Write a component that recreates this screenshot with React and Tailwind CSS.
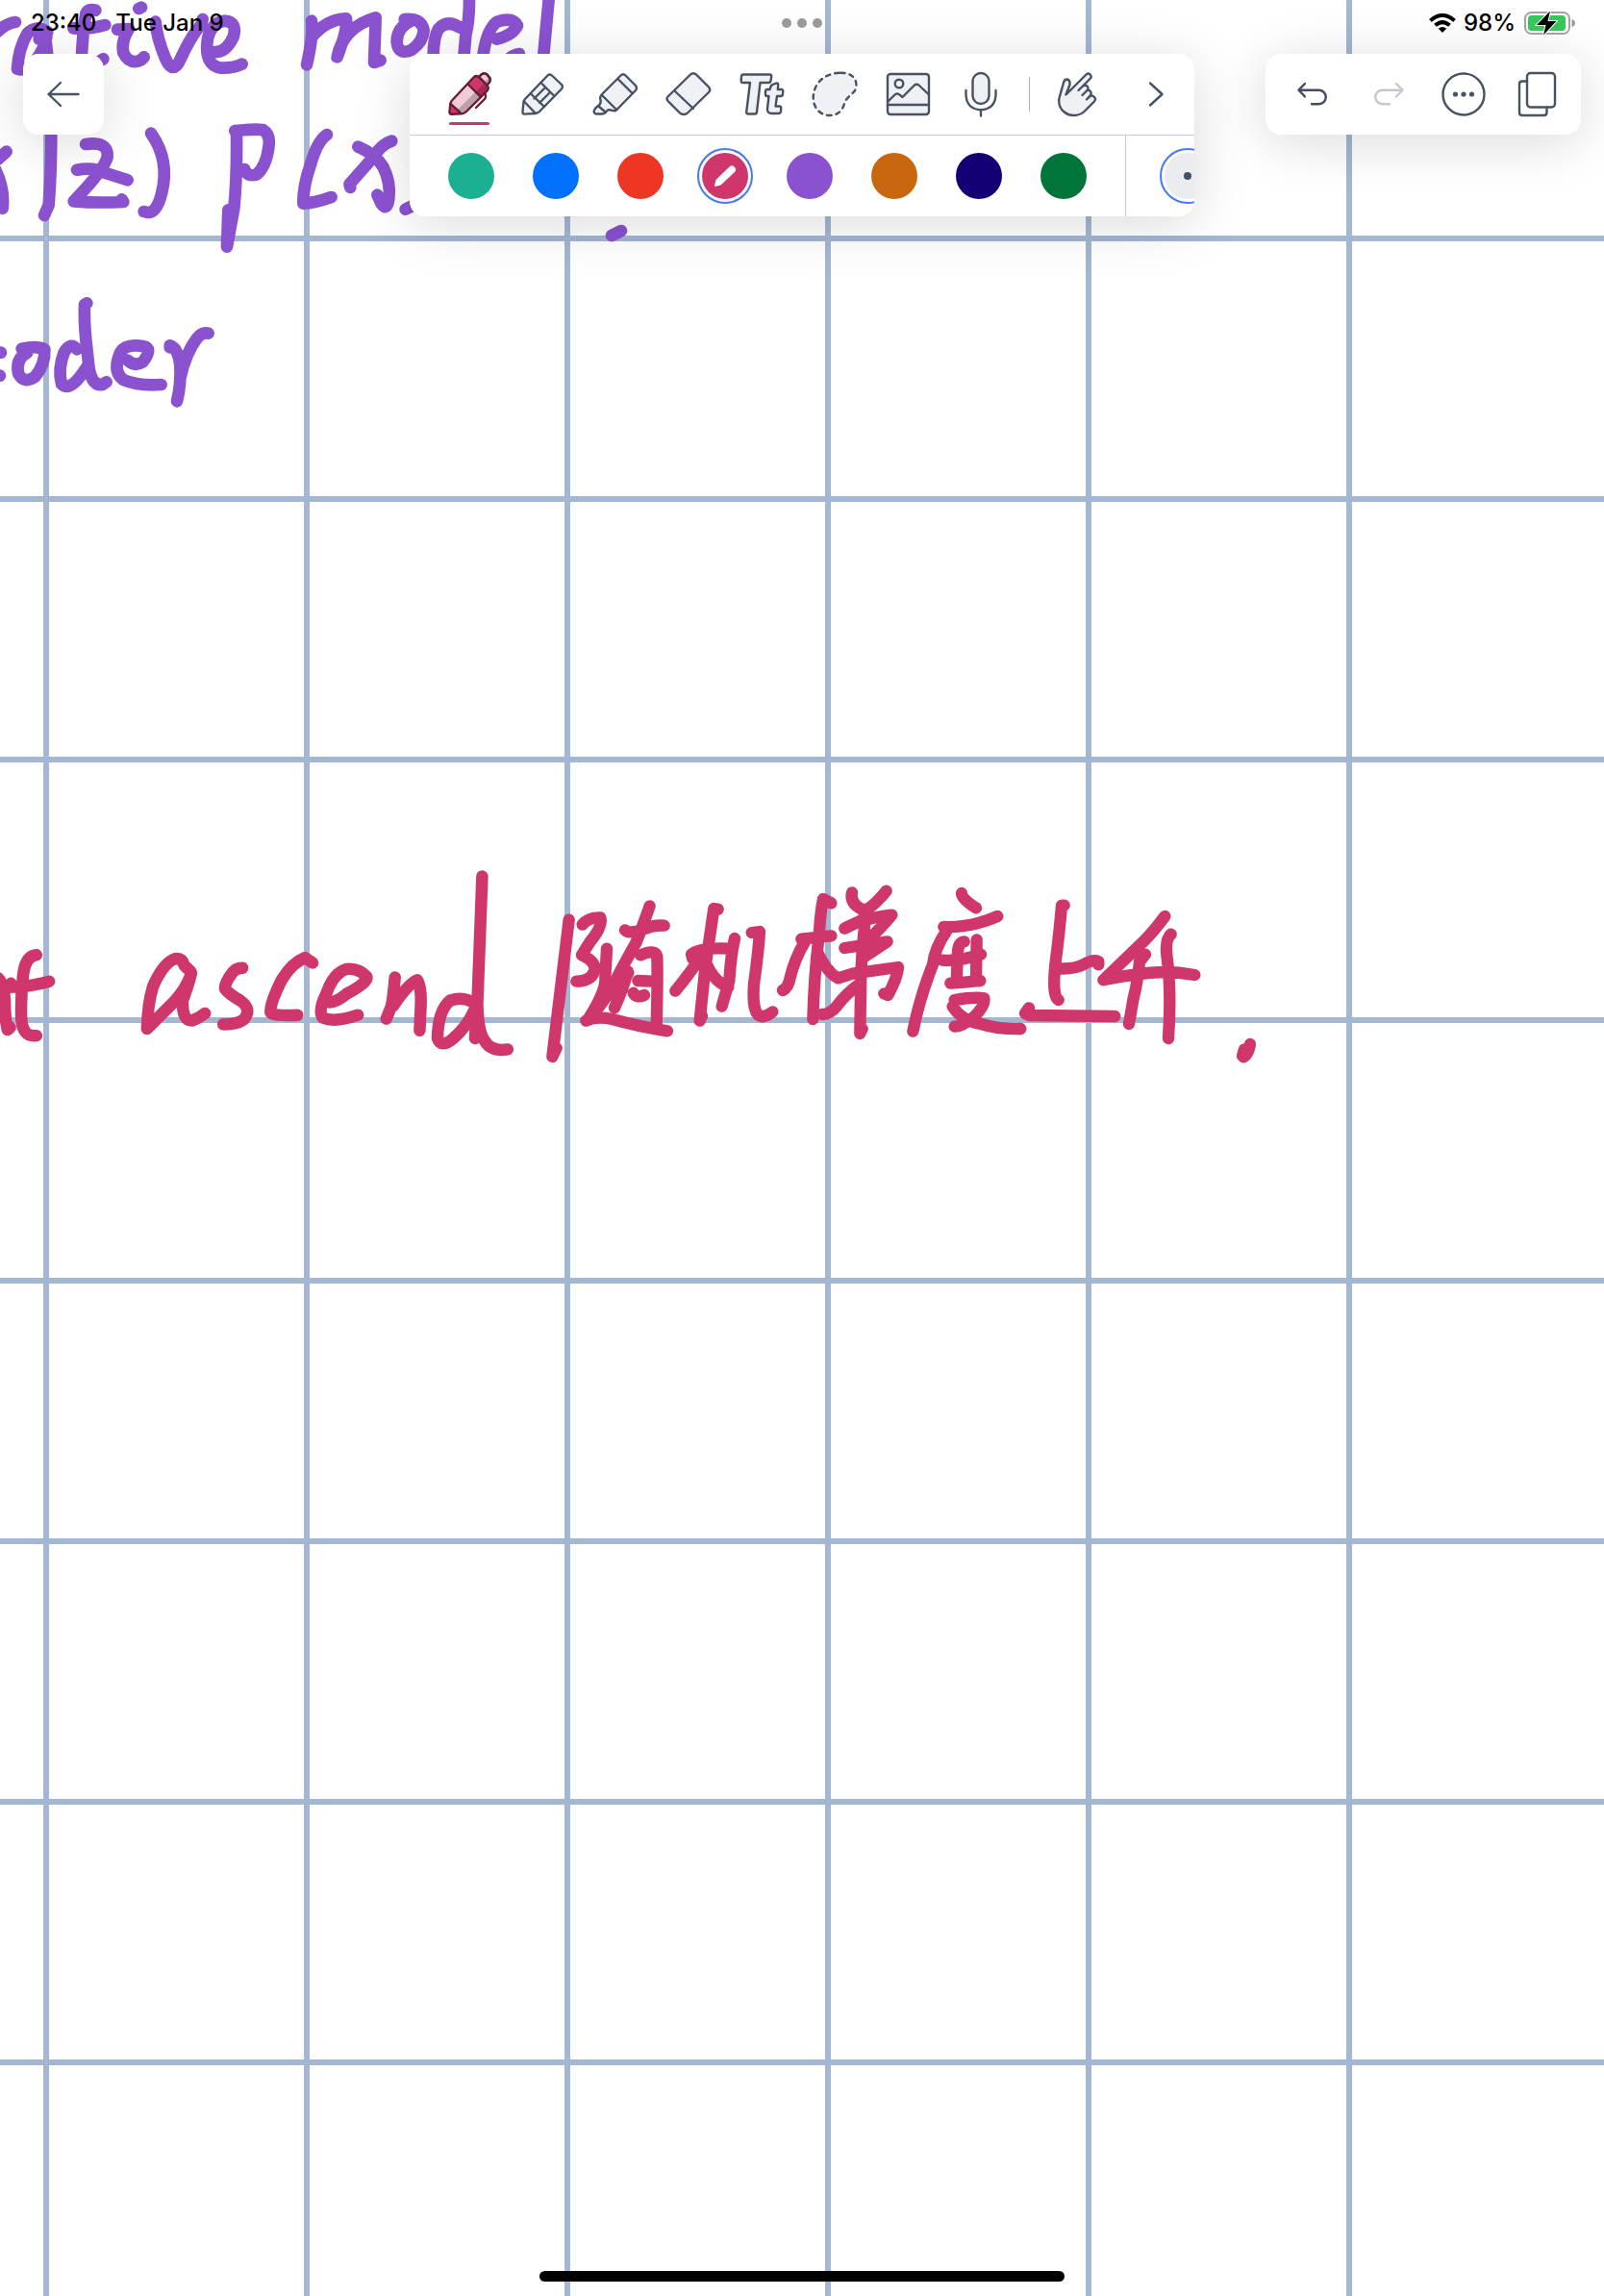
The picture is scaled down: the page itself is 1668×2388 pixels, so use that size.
const INK = '#475263';

function Icon({ children, color = INK, fill = 'none', size = 48, width = 2.4 }) {
  return (
    <svg
      width={size}
      height={size}
      viewBox="0 0 48 48"
      fill={fill}
      stroke={color}
      strokeWidth={width}
      strokeLinecap="round"
      strokeLinejoin="round"
      aria-hidden="true"
    >
      {children}
    </svg>
  );
}

const PenIcon = () => (
  <Icon color="#661e38">
    <path d="M3.5 42 4.3 34Q4.5 32 6 30.5L28 7Q31 3.5 34.5 6.5L43 15Q45 18 43 21L21 42.5Q19 44 16 44.2L5.5 44.8Q3.2 44.8 3.5 42Z" fill="#f3cad8" stroke="none" />
    <path d="M31 21 36.500 26.500 20 43 11 41Z" fill="#b9a0ab" stroke="none" />
    <path d="M22 13 28 7Q31 3.500 34.500 6.500L43 15Q45 18 43 20L36.500 26.500Z" fill="#cf366b" stroke="none" />
    <path d="M31 21.500 40 12 43 15Q45 18 43 20L36.500 26.500Z" fill="#a32a54" stroke="none" />
    <path d="M4.500 33 15 44 5.500 44.800Q3.200 44.800 3.500 42Z" fill="#cf366b" stroke="none" />
    <path d="M34 6 36.500 3.500Q39.500 1 42.500 3.500L44.500 6Q47 9 44.500 12L42.500 14.500Z" fill="#f3cad8" />
    <path d="M39.500 11 45 6.500Q47 9 44.500 12L42.500 14Z" fill="#b9a0ab" stroke="none" />
    <path d="M34 6 36.500 3.500Q39.500 1 42.500 3.500L44.500 6Q47 9 44.500 12L42.500 14.500" />
    <path d="M3.500 42 4.300 34Q4.500 32 6 30.500L28 7Q31 3.500 34.500 6.500L42.500 14.500Q45 17.500 42.500 20.500L21 42Q19 44 16 44.200L5.500 44.800Q3.200 44.800 3.500 42Z" />
    <path d="M22.500 13.500 36 27M4.500 34 15 43.500M40 23Q42.500 26.500 39.500 29.500L31 38" />
  </Icon>
);

const PencilIcon = () => (
  <Icon>
    <path d="M3.500 42 4.500 32Q4.600 30.500 6 29L29 5Q31.500 2 34.500 5L43.500 13.500Q46.500 16 43.500 19L21 42Q19.500 43.700 17 44L5.500 44.600Q3.200 44.700 3.500 42Z" fill="#f0f1f5" />
    <path d="M22.500 12 36.500 26M12.500 24 26 37M5 31.500 16.500 43.500M27 17 15.500 28.500M32 22 21 33" />
  </Icon>
);

const HighlighterIcon = () => (
  <Icon fill="#f0f1f5">
    <path d="M10 24 29.500 4.500Q32 2 34.500 4.500L45 15Q47 17.500 45 20L25.500 40Q23 42 21 41 17 39.500 15.500 41L13.500 43Q12 44.500 10 44.500H4Q1 44 2 40.500 3 38.500 5.500 36.500 9.500 34 8.500 30 7.500 26.500 10 24Z" />
    <path d="M10 25 25 40M26.500 8 41.500 23M6 36 14 43" />
  </Icon>
);

const EraserIcon = () => (
  <Icon fill="#f0f1f5">
    <path d="M2.500 26.500 26 3.500Q29 1 32 3.500L45 16.500Q47.500 19.500 45 22L23 43.500Q21.500 45 19 45 16.500 45 15 43.500L2.500 31Q0.500 28.500 2.500 26.500Z" />
    <path d="M9.500 20.500 29 39" fill="none" />
  </Icon>
);

const TextIcon = () => (
  <Icon fill="#f0f1f5">
    <path d="M5 3.500H32.500Q34.500 3.500 34.200 5.500L33.500 10Q33.200 12 31 12H22.500L19 42.500Q18.800 44.500 17 44.500H10Q8 44.500 8.200 42.500L12 12H4.500Q2.500 12 2.700 10L3 5.500Q3.200 3.500 5 3.500Z" />
    <path d="M35.500 14 39 12.700Q41.500 12 41.200 14.500L40.800 19H44.500Q46.500 19 46.200 21L46 24Q45.700 26 43.700 26H40L38.500 36.500H42.500Q44.500 36.500 44.200 38.500L44 42Q43.800 44 41.500 44H34Q29.500 43.500 30 39L31.500 26H30Q28 26 28 24V21Q28.200 19 30 19H32.500L33.500 16Q34 14.500 35.500 14Z" />
  </Icon>
);

const LassoIcon = () => (
  <Icon fill="#f0f1f5">
    <path d="M30 1.700C40 1.500 46.500 6.500 46.500 14.500 46.500 24 37 24 34 34 31.500 42 27 46 18.500 46 8 46 1.700 37 1.700 28 1.700 13 13 2 30 1.700Z" strokeDasharray="4.500 5" />
  </Icon>
);

const ImageIcon = () => (
  <Icon fill="#f0f1f5">
    <rect x="3" y="3" width="43" height="42" rx="3" />
    <circle cx="15" cy="13" r="4.300" />
    <path d="M3 32 10 25Q13 22 16 25L18.500 27 30.500 15Q33.500 12.500 36.500 15.500L46 24.500M3 35H46" fill="none" />
  </Icon>
);

const MicIcon = () => (
  <Icon>
    <rect x="15.500" y="2" width="17" height="32" rx="8.500" fill="#f0f1f5" />
    <path d="M8.500 20V25Q9.500 39.500 24 40.300 38.500 39.500 39.500 25V20M24 40.500V46.500" />
  </Icon>
);

const HandIcon = () => (
  <Icon fill="#f0f1f5">
    <path d="M12.500 24.500 16.500 14Q17 9 13.500 8.500 11 8.500 10 12L5.500 28Q4 36 9.500 41.500 15 46.500 22 46 28 45.500 32 41.500L42 31.500Q44 29 42 27 39.500 24.500 37.500 26L34 29.500 38 25Q39.500 22.500 37.500 20.500 35.500 19 33.500 21L29.500 25 34.500 20Q36.500 17.500 34.500 15.500 32 13.500 29 16.500L25.500 20 38 7.500Q39.500 5.500 37.500 3.300 35.500 1.500 33.500 3.500L12.500 24.500Z" />
  </Icon>
);

const TOOLS = [
  ['Pen', PenIcon],
  ['Pencil', PencilIcon],
  ['Highlighter', HighlighterIcon],
  ['Eraser', EraserIcon],
  ['Text', TextIcon],
  ['Lasso', LassoIcon],
  ['Image', ImageIcon],
  ['Microphone', MicIcon],
];

const COLORS = [
  ['Teal', 'bg-[#1bb092]'],
  ['Blue', 'bg-[#0070ff]'],
  ['Red', 'bg-[#ee3624]'],
  ['Pink', 'bg-[#cf366b]'],
  ['Purple', 'bg-[#8b52d0]'],
  ['Orange', 'bg-[#c9670e]'],
  ['Navy', 'bg-[#120074]'],
  ['Green', 'bg-[#007439]'],
];

const PANEL = 'rounded-2xl bg-white shadow-[0_8px_56px_rgba(0,0,0,0.15)]';

function StatusBar() {
  return (
    <div className="grid h-12 grid-cols-[1fr_auto_1fr] items-center text-2xl font-medium text-black">
      <div className="flex gap-5 pl-8">
        <span>23:40</span>
        <span>Tue Jan 9</span>
      </div>
      <button aria-label="Multitasking" className="flex gap-1.5">
        <span className="size-[10px] rounded-full bg-[#999]" />
        <span className="size-[10px] rounded-full bg-[#999]" />
        <span className="size-[10px] rounded-full bg-[#999]" />
      </button>
      <div className="flex items-center justify-end gap-2 pr-[30px]">
        <svg width="28" height="20" viewBox="0 0 28 20" fill="none" stroke="#000" strokeWidth="4" aria-label="Wi-Fi">
          <path d="M1.500 7.500Q14-3.500 26.500 7.500M6.500 12.300Q14 5.800 21.500 12.300" />
          <path d="M14 20 9.800 15.700Q14 12.500 18.200 15.700Z" fill="#000" stroke="none" />
        </svg>
        <span>98%</span>
        <svg width="54" height="26" viewBox="0 0 54 26" aria-label="Battery charging">
          <rect x="2" y="2" width="46" height="22" rx="6.500" fill="#fff" stroke="#a3a3a3" strokeWidth="2" />
          <rect x="5" y="5" width="39" height="16" rx="3.500" fill="#34c759" />
          <path d="M50.500 9Q54 10 54 13 54 16 50.500 17Z" fill="#999" />
          <path d="M28 0.500 14 15H23.500L21 25.500 34.500 11H25.500Z" fill="#000" stroke="#fff" strokeWidth="2" paintOrder="stroke" />
        </svg>
      </div>
    </div>
  );
}

function ToolPanel() {
  return (
    <section aria-label="Tools" className="w-[816px] overflow-hidden rounded-2xl bg-white">
      <div className="flex h-[84px] items-center pl-6">
        {TOOLS.map(([name, Glyph], i) => (
          <button key={name} aria-label={name} className="relative flex h-full w-[76px] items-center justify-center">
            <Glyph />
            {i === 0 && <span className="absolute bottom-[10px] h-[3px] w-[42px] rounded-full bg-[#cf366b]" />}
          </button>
        ))}
        <div className="flex w-6 justify-center">
          <span className="h-9 w-px bg-[#a9adba]" />
        </div>
        <button aria-label="Touch" className="flex h-full w-[76px] items-center justify-center">
          <HandIcon />
        </button>
        <button aria-label="More tools" className="flex h-full flex-1 items-center justify-center">
          <Icon>
            <path d="M20 12.500 32.500 24 20 35.500" />
          </Icon>
        </button>
      </div>
      <div className="flex h-[85px] items-center border-t border-[#c6cadb] pl-5">
        {COLORS.map(([name, bg]) => (
          <button key={name} aria-label={name} className="flex h-full w-[88px] shrink-0 items-center justify-center">
            {name === 'Pink' ? (
              <span className="flex size-[58px] items-center justify-center rounded-full border-2 border-[#4679f8]">
                <span className={'flex size-12 items-center justify-center rounded-full ' + bg}>
                  <svg width="48" height="48" viewBox="0 0 48 48" fill="#fff" aria-hidden="true">
                    <path d="M13 35 14 29.500Q14.200 28 15.500 27L28.500 14.500Q31 12 33.500 14.500 36.500 17.500 34 20L20.500 32.500Q19.500 33.700 18 34Z" />
                  </svg>
                </span>
              </span>
            ) : (
              <span className={'size-12 rounded-full ' + bg} />
            )}
          </button>
        ))}
        <div className="ml-5 flex h-full flex-1 items-center overflow-hidden border-l border-[#c6cadb] pl-[35px]">
          <button
            aria-label="Stroke size"
            className="flex size-[58px] shrink-0 items-center justify-center rounded-full border-2 border-[#4679f8]"
          >
            <span className="flex size-12 items-center justify-center rounded-full bg-[#ebecef]">
              <span className="size-2 rounded-full bg-[#475263]" />
            </span>
          </button>
        </div>
      </div>
    </section>
  );
}

function ActionPanel() {
  return (
    <section aria-label="Document" className={'flex h-[84px] items-center justify-self-end px-2 ' + PANEL}>
      <button aria-label="Undo" className="flex h-full w-20 items-center justify-center">
        <Icon color="#454b63">
          <path d="M17 13 10.500 19.700 17 26.500M10.500 19.700H31.500A7.300 7.300 0 0 1 31.500 34.300H24" />
        </Icon>
      </button>
      <button aria-label="Redo" disabled className="flex h-full w-20 items-center justify-center">
        <Icon color="#c6c8d0">
          <path d="M32 13 38.500 19.700 32 26.500M38.500 19.700H17.500A7.300 7.300 0 0 0 17.500 34.300H25" />
        </Icon>
      </button>
      <button aria-label="More" className="flex h-full w-[76px] items-center justify-center">
        <Icon>
          <circle cx="24" cy="24" r="21.500" />
          <g fill={INK} stroke="none">
            <circle cx="15.500" cy="24" r="2.600" />
            <circle cx="24" cy="24" r="2.600" />
            <circle cx="32.500" cy="24" r="2.600" />
          </g>
        </Icon>
      </button>
      <button aria-label="Pages" className="flex h-full w-[76px] items-center justify-center">
        <Icon>
          <path d="M14 10.500H9Q6 10.500 6 13.500V43Q6 46 9 46H31.500Q34.500 46 34.500 43V37.500" />
          <rect x="14" y="2" width="29" height="35.500" rx="3.500" />
        </Icon>
      </button>
    </section>
  );
}

/* Freehand pen strokes, grouped by the tile of the page they were written on. */
const STROKES = [
  {
    at: 'translate(0 0) scale(0.33333)',
    color: '#8b52d0',
    width: 38,
    lines: [
      'M-10 100Q25 70 48 69',
      'M148 100Q115 75 85 105 58 150 54 215 80 225 110 190 140 150 145 115L122 122M143 130 150 190',
      'M298 32Q275 26 268 42 258 100 254 190M229 88Q280 92 328 78M270 205Q300 200 322 184',
      'M433 27 441 23M366 92Q390 92 402 90 377 130 385 165 400 195 425 192 440 190 449 178',
      'M485 68Q490 120 515 180 540 240 565 180 600 105 628 78L632 60',
      'M668 162Q705 165 728 115 742 68 700 65 660 70 648 120 635 205 690 212 730 213 755 200',
      'M972 65Q978 110 957 202M973 115Q1020 60 1080 58 1085 90 1052 178 1070 85 1172 55 1170 120 1167 195L1187 188',
      'M20 473-8 498M-14 530Q15 590 8 650',
      'M160 400Q160 540 152 640L138 672',
      'M267 450Q340 440 335 490 325 530 230 628 300 634 385 630L380 622M240 530Q290 520 330 540L398 562',
      'M471 416Q530 500 505 600 490 665 460 663L449 660',
      'M733 408Q790 402 820 405 845 420 838 460 830 520 800 545 770 552 763 528M738 410Q740 550 730 650L708 770M712 655 708 765',
      'M1020 420Q990 440 970 510 945 580 946 635 980 634 1034 615',
      'M1117 458Q1170 480 1195 520 1220 570 1213 620 1208 660 1190 636L1177 608M1222 440Q1190 450 1165 490L1090 575 1093 585',
    ],
  },
  {
    at: 'translate(400 0) scale(0.33333)',
    color: '#8b52d0',
    width: 38,
    lines: [
      'M62 60Q115 55 122 95 120 130 85 155 42 175 38 130 38 85 85 64',
      'M235 86Q195 60 168 90 150 120 152 190M264-12Q265 60 253 110L246 190',
      'M350 122Q400 110 414 80 400 52 350 68 315 95 305 190M380 190Q400 170 420 168',
      'M513-12 494 190',
      'M65 653 100 636M708 735 738 720',
    ],
  },
  {
    at: 'translate(0 220) scale(0.33333)',
    color: '#8b52d0',
    width: 38,
    lines: [
      'M-14 440H3M-14 512H0',
      'M68 428Q115 418 139 430 142 475 110 515 75 540 57 505 48 460 85 440',
      'M240 430Q220 405 200 440 180 490 192 538 215 560 250 515L275 480M271 286 264 290Q262 340 268 400L278 490Q288 545 320 540L332 532',
      'M398 464Q420 485 445 470 480 425 445 420 390 412 375 440 350 500 385 525 430 545 503 540',
      'M530 418Q555 425 562 480 565 540 552 592M562 520Q580 440 615 395 630 375 650 380M536 424H530',
    ],
  },
  {
    at: 'translate(0 880) scale(0.35714)',
    color: '#cf366b',
    width: 35,
    lines: [
      'M-6 384Q12 400 14 450 14 500 22 535L30 528M32 410V400',
      'M106 317Q75 320 68 370 60 440 62 500 65 558 106 552M24 410Q80 412 143 394',
      'M555 365 537 348Q530 325 510 328 475 340 445 410 430 460 428 532L510 450Q545 410 557 370 550 400 532 450 530 510 560 508 580 500 597 487',
      'M706 355Q690 355 680 365 655 395 655 415 665 430 700 450 735 475 710 505 690 520 650 519',
      'M910 340 888 325Q850 340 820 390 785 460 788 485 792 495 866 492',
      'M960 455Q980 455 1010 430 1075 395 1067 380 1045 355 1010 358 970 370 950 430 925 480 940 500 975 515 1042 492',
      'M1150 382Q1145 440 1140 465L1125 503M1145 465Q1190 400 1215 390 1228 410 1225 470L1222 537',
      'M1404 88 1390 460 1383 560M1385 460Q1350 435 1310 450 1275 480 1274 560 1285 590 1320 560 1360 525 1380 480M1390 460Q1392 540 1410 565 1430 600 1478 592',
    ],
  },
  {
    at: 'translate(540 880) scale(0.33333)',
    color: '#cf366b',
    width: 37,
    lines: [
      'M155 230 103 657 116 630M197 245Q215 222 253 223 262 250 220 300L195 340Q240 360 235 388 225 422 178 422',
      'M273 320 268 410Q272 450 215 540M208 545Q240 530 290 540 360 560 462 577',
      'M407 187Q385 250 365 300 320 380 300 420 270 480 225 530M330 262Q340 275 380 262 420 245 452 248',
      'M378 340Q425 320 430 345 432 420 428 560M338 390Q330 430 297 505M300 470 340 395M370 420 415 422M356 458Q365 476 390 465',
      'M620 197 607 195Q595 280 580 380L563 545 570 530M537 338Q560 315 660 320M540 350 570 340Q530 400 487 452M585 370Q610 425 652 440M672 288Q660 340 655 420L632 500M725 270 750 267Q745 340 732 430 725 530 757 532 775 530 790 517',
      'M973 178 948 165Q940 200 935 280 920 400 916 540M880 290Q920 285 973 280M890 300Q860 350 845 410 840 440 822 450M930 330Q960 395 995 412L1040 398 1182 378Q1180 410 1150 465L1138 460',
      'M1038 145Q1030 180 1075 200 1100 195 1145 140M1015 257 1080 225M1082 210Q1070 300 1066 400L1063 585 1070 570M1015 257Q1070 225 1162 215 1130 255 1080 300M1015 318 1148 298 1070 350M1062 430Q1020 460 990 500 970 525 945 525',
    ],
  },
  {
    at: 'translate(900 880) scale(0.33333)',
    color: '#cf366b',
    width: 37,
    lines: [
      'M300 147Q300 165 345 193M244 252Q330 255 412 219M255 262Q215 320 210 370 170 470 148 578M240 356Q290 360 360 338',
      'M308 298Q290 300 288 330L284 425M347 292 345 415M265 428Q310 425 358 420',
      'M278 480Q340 470 370 475 375 495 340 532 300 565 278 563M272 500Q300 545 360 555 420 573 484 570',
      'M620 185 612 185Q605 270 592 370 582 470 602 480M600 382Q650 385 680 370 710 352 727 360V370M510 505 498 522 510 528 778 531',
      'M934 219Q900 265 870 295L742 418Q850 395 930 393 980 393 1027 402M873 338 855 360Q850 420 835 480L822 555M953 275Q935 290 940 340 955 450 945 600',
      'M1200 618Q1195 650 1180 658M1182 634 1176 655',
    ],
  },
];

function Handwriting() {
  return (
    <svg
      width="1668"
      height="1200"
      viewBox="0 0 1668 1200"
      className="pointer-events-none absolute top-0 left-0"
      role="img"
      aria-label="Handwritten notes"
    >
      {STROKES.map((group) => (
        <g
          key={group.at}
          transform={group.at}
          fill="none"
          stroke={group.color}
          strokeWidth={group.width}
          strokeLinecap="round"
          strokeLinejoin="round"
        >
          {group.lines.map((d) => (
            <path key={d} d={d} />
          ))}
        </g>
      ))}
    </svg>
  );
}

export default function App() {
  return (
    <main className="relative flex min-h-screen flex-col overflow-hidden bg-white bg-[linear-gradient(to_right,#a3b6d2_6px,transparent_6px),linear-gradient(to_bottom,#a3b6d2_6px,transparent_6px)] bg-[size:271px_271px] bg-[position:45px_245px] font-['Inter',sans-serif]">
      <Handwriting />
      <header className="relative">
        <div className="relative z-10">
          <StatusBar />
        </div>
        <div className="grid grid-cols-[1fr_auto_1fr] items-start px-6 pt-2">
          <button aria-label="Back" className={'flex size-[84px] items-center justify-center ' + PANEL}>
            <Icon>
              <path d="M21 12 8.500 24 21 36M8.500 24H39.500" />
            </Icon>
          </button>
          <div className={PANEL}>
            <ToolPanel />
          </div>
          <ActionPanel />
        </div>
      </header>
      <div className="flex-1" />
      <footer className="relative flex justify-center pb-[15px]">
        <div className="h-[11px] w-[546px] rounded-full bg-black" />
      </footer>
    </main>
  );
}
